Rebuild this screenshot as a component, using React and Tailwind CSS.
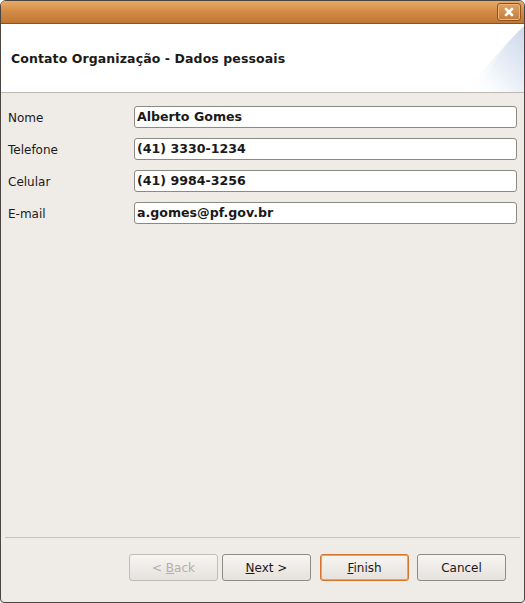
import React from 'react';

const fields = [
    { label: 'Nome', value: 'Alberto Gomes' },
    { label: 'Telefone', value: '(41) 3330-1234' },
    { label: 'Celular', value: '(41) 9984-3256' },
    { label: 'E-mail', value: 'a.gomes@pf.gov.br' },
];

const WizButton = ({ children, disabled, primary }) => (
    <button
        className={
            'w-[89px] h-[27px] rounded-[3px] border text-[12px] bg-gradient-to-b from-[#f7f5f3] to-[#e6e1dc] ' +
            (disabled
                ? 'border-[#c2bdb7] text-[#b4afa9]'
                : primary
                    ? 'border-[#d8742a] shadow-[inset_0_0_0_1px_#f0a060] text-[#1a1a1a]'
                    : 'border-[#8f8a84] text-[#1a1a1a]')
        }
    >
        {children}
    </button>
);

export default function App() {
    return (
        <div
            className="w-[525px] h-[603px] flex flex-col bg-[#efebe7] border border-[#4a4540] rounded-t-[6px] rounded-b-[4px] overflow-hidden text-[#1a1a1a]"
            style={{ fontFamily: '"DejaVu Sans", Verdana, sans-serif' }}
        >
            {/* title bar */}
            <div className="h-[23px] shrink-0 flex items-center justify-end pr-[3px] bg-gradient-to-b from-[#e9aa66] via-[#d28a45] to-[#c17733] border-b border-[#8a5420]">
                <div className="w-[24px] h-[18px] rounded-[3px] border border-[#8a5420] bg-gradient-to-b from-[#dfa464] to-[#c47a38] flex items-center justify-center shadow-[inset_0_0_0_1px_#eab67c]">
                    <svg width="10" height="10" viewBox="0 0 10 10">
                        <path d="M2 2 L8 8 M8 2 L2 8" stroke="#ffffff" strokeWidth="2.6" strokeLinecap="round" />
                    </svg>
                </div>
            </div>

            {/* header */}
            <div className="h-[69px] shrink-0 relative bg-white border-b border-[#bdb8b2] flex items-center pl-[10px] pb-[2px] overflow-hidden">
                <span className="text-[12.5px] font-bold tracking-[0.1px] translate-y-[2px]">Contato Organização - Dados pessoais</span>
                <svg className="absolute right-0 top-0" width="80" height="69" viewBox="0 0 80 69">
                    <defs>
                        <linearGradient id="sw" x1="0.1" y1="0.9" x2="0.9" y2="0.1">
                            <stop offset="0" stopColor="#ffffff" stopOpacity="0" />
                            <stop offset="0.45" stopColor="#eef2f9" />
                            <stop offset="1" stopColor="#d3dcee" />
                        </linearGradient>
                    </defs>
                    <path d="M80 0 L80 69 L14 69 C38 52 56 24 80 2 Z" fill="url(#sw)" />
                    <path d="M80 2 C58 22 44 48 34 69 L14 69 C38 52 56 24 80 2 Z" fill="#ffffff" opacity="0.35" />
                </svg>
            </div>

            {/* form */}
            <div className="flex-1 flex flex-col gap-[10px] pt-[13px] pl-[7px] pr-[7px]">
                {fields.map((f) => (
                    <div key={f.label} className="flex items-center">
                        <div className="w-[126px] text-[12px] translate-y-[1px]">{f.label}</div>
                        <div className="flex-1 h-[22px] bg-white border border-[#8d8882] rounded-[3px] flex items-center pl-[2px] pt-[1px] text-[12.6px] font-bold">
                            {f.value}
                        </div>
                    </div>
                ))}
            </div>

            {/* footer */}
            <div className="h-[65px] shrink-0 mx-[4px] border-t border-[#c7c2bc] flex items-start justify-end pt-[16px] pr-[14px]">
                <div className="flex gap-[4px]">
                    <WizButton disabled>&lt; <u>B</u>ack</WizButton>
                    <WizButton><u>N</u>ext &gt;</WizButton>
                </div>
                <div className="flex gap-[8px] ml-[9px]">
                    <WizButton primary><u>F</u>inish</WizButton>
                    <WizButton>Cancel</WizButton>
                </div>
            </div>
        </div>
    );
}
